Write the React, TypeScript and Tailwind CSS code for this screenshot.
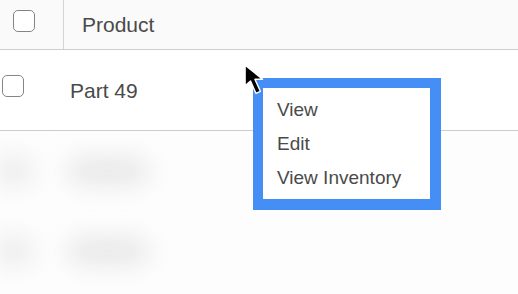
import React from "react";

const Checkbox: React.FC<{ className?: string }> = ({ className = "" }) => (
  <div
    className={`w-[22px] h-[22px] rounded-[5px] border-[1.5px] border-[#858585] bg-white ${className}`}
  />
);

const Cursor: React.FC = () => (
  <svg
    width="24"
    height="36"
    viewBox="0 0 22 33"
    className="absolute left-[244px] top-[64px]"
  >
    <path
      d="M1 1 L1 20 L6 15.5 L11 27 L15 25 L10 14 L17 14 Z"
      fill="#000"
      stroke="#fff"
      strokeWidth="1.3"
      strokeLinejoin="round"
    />
  </svg>
);

const menuItems = ["View", "Edit", "View Inventory"];

export default function App() {
  return (
    <div
      className="relative w-[518px] h-[294px] overflow-hidden bg-[#fdfdfd] text-[#4a4a4a]"
      style={{ fontFamily: '"Liberation Sans", Arial, sans-serif' }}
    >
      {/* header */}
      <div className="flex h-[50px] bg-[#fafafa] border-b border-[#cdcdcd]">
        <div className="w-[64px] border-r border-[#d4d4d4] pl-[13px] pt-[10px]">
          <Checkbox className="w-[21px] h-[21px]" />
        </div>
        <div className="flex items-center pl-[18px] pt-[1px] text-[21px]">Product</div>
      </div>

      {/* row */}
      <div className="flex h-[81px] bg-white border-b border-[#cdcdcd]">
        <div className="w-[64px] pl-[2px] pt-[25px]">
          <Checkbox />
        </div>
        <div className="flex items-center pl-[6px] pt-[2px] text-[21px]">Part 49</div>
      </div>

      {/* blurred rows */}
      <div className="flex flex-col">
        {[0, 1].map((i) => (
          <div key={i} className="flex h-[80px] items-center">
            <div className="ml-[-6px] w-[40px] h-[30px] rounded-full bg-[#ececec] blur-md" />
            <div className="ml-[34px] w-[80px] h-[26px] rounded-full bg-[#e6e6e6] blur-md" />
          </div>
        ))}
      </div>

      {/* context menu */}
      <div className="absolute left-[253px] top-[78px] w-[188px] h-[132px] border-[10px] border-r-[11px] border-b-[11px] border-[#448ef6] bg-white">
        <ul className="pl-[14px] pt-[5px] text-[19px] leading-[34px] text-[#4a4a4a]">
          {menuItems.map((item) => (
            <li key={item}>{item}</li>
          ))}
        </ul>
      </div>

      <Cursor />
    </div>
  );
}
